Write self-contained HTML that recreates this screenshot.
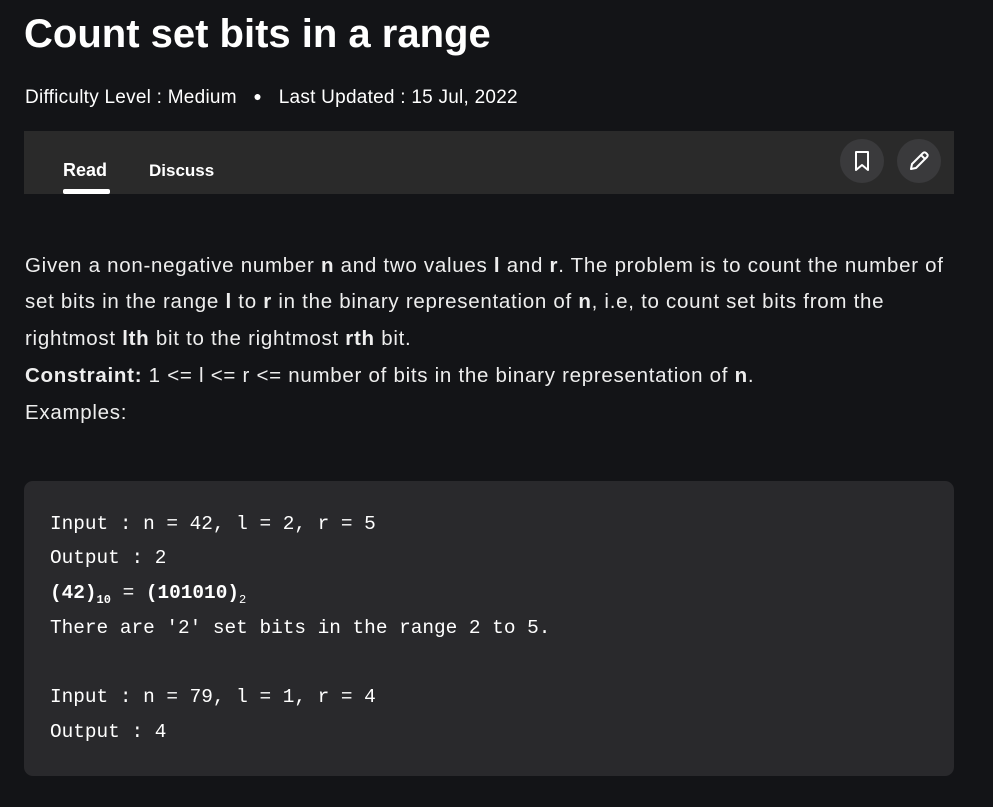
<!DOCTYPE html>
<html><head><meta charset="utf-8"><style>
body{margin:0;background:#131417;width:993px;height:807px;overflow:hidden;font-family:"Liberation Sans",sans-serif;color:#fff;position:relative}
.a{position:absolute;white-space:nowrap}
h1{position:absolute;left:24px;top:12px;margin:0;font-size:40px;font-weight:bold;letter-spacing:0}
.meta{left:25px;top:87px;font-size:19px;letter-spacing:0.25px}
.bar{left:24px;top:131px;width:930px;height:63px;background:#2a2a2a}
.tab{font-size:18px;font-weight:bold;top:160px}
.ul{left:63px;top:189px;width:47px;height:5px;background:#fff;border-radius:2px}
.ic{top:139px;width:44px;height:44px;border-radius:50%;background:#3a3a3c;display:flex;align-items:center;justify-content:center}
.p{left:25px;font-size:20.5px;color:#eee;letter-spacing:0.72px}
.code{left:24px;top:481px;width:930px;height:295px;background:#29292c;border-radius:9px}
.m{left:50px;font-family:"Liberation Mono",monospace;font-size:19.4px;color:#fff}
sub{font-size:12px}
</style></head><body>
<h1>Count set bits in a range</h1>
<div class="a meta">Difficulty Level : Medium &nbsp;&nbsp;<span style="font-size:14px;position:relative;top:-2px">●</span>&nbsp;&nbsp; Last Updated : 15 Jul, 2022</div>
<div class="a bar"></div>
<div class="a tab" style="left:63px">Read</div>
<div class="a tab" style="left:149px;font-size:17px;top:161px">Discuss</div>
<div class="a ul"></div>
<div class="a ic" style="left:840px"><svg width="20" height="22" viewBox="0 0 20 22"><path d="M4 2h12v18l-6-5-6 5z" fill="none" stroke="#fff" stroke-width="2" stroke-linejoin="round"/></svg></div>
<div class="a ic" style="left:897px"><svg width="22" height="22" viewBox="0 0 22 22"><path d="M3 19l1-5L15 3a2 2 0 0 1 3 0l1 1a2 2 0 0 1 0 3L8 18z M13 5l4 4" fill="none" stroke="#fff" stroke-width="2" stroke-linejoin="round"/></svg></div>
<div class="a p" style="top:254px">Given a non-negative number <b>n</b> and two values <b>l</b> and <b>r</b>. The problem is to count the number of</div>
<div class="a p" style="top:290px">set bits in the range <b>l</b> to <b>r</b> in the binary representation of <b>n</b>, i.e, to count set bits from the</div>
<div class="a p" style="top:327px">rightmost <b>lth</b> bit to the rightmost <b>rth</b> bit.</div>
<div class="a p" style="top:364px"><b>Constraint:</b> 1 &lt;= l &lt;= r &lt;= number of bits in the binary representation of <b>n</b>.</div>
<div class="a p" style="top:401px">Examples:</div>
<div class="a code"></div>
<div class="a m" style="top:513px">Input : n = 42, l = 2, r = 5</div>
<div class="a m" style="top:547px">Output : 2</div>
<div class="a m" style="top:582px"><b>(42)<sub>10</sub></b> = <b>(101010)</b><sub>2</sub></div>
<div class="a m" style="top:617px">There are '2' set bits in the range 2 to 5.</div>
<div class="a m" style="top:686px">Input : n = 79, l = 1, r = 4</div>
<div class="a m" style="top:721px">Output : 4</div>
</body></html>
